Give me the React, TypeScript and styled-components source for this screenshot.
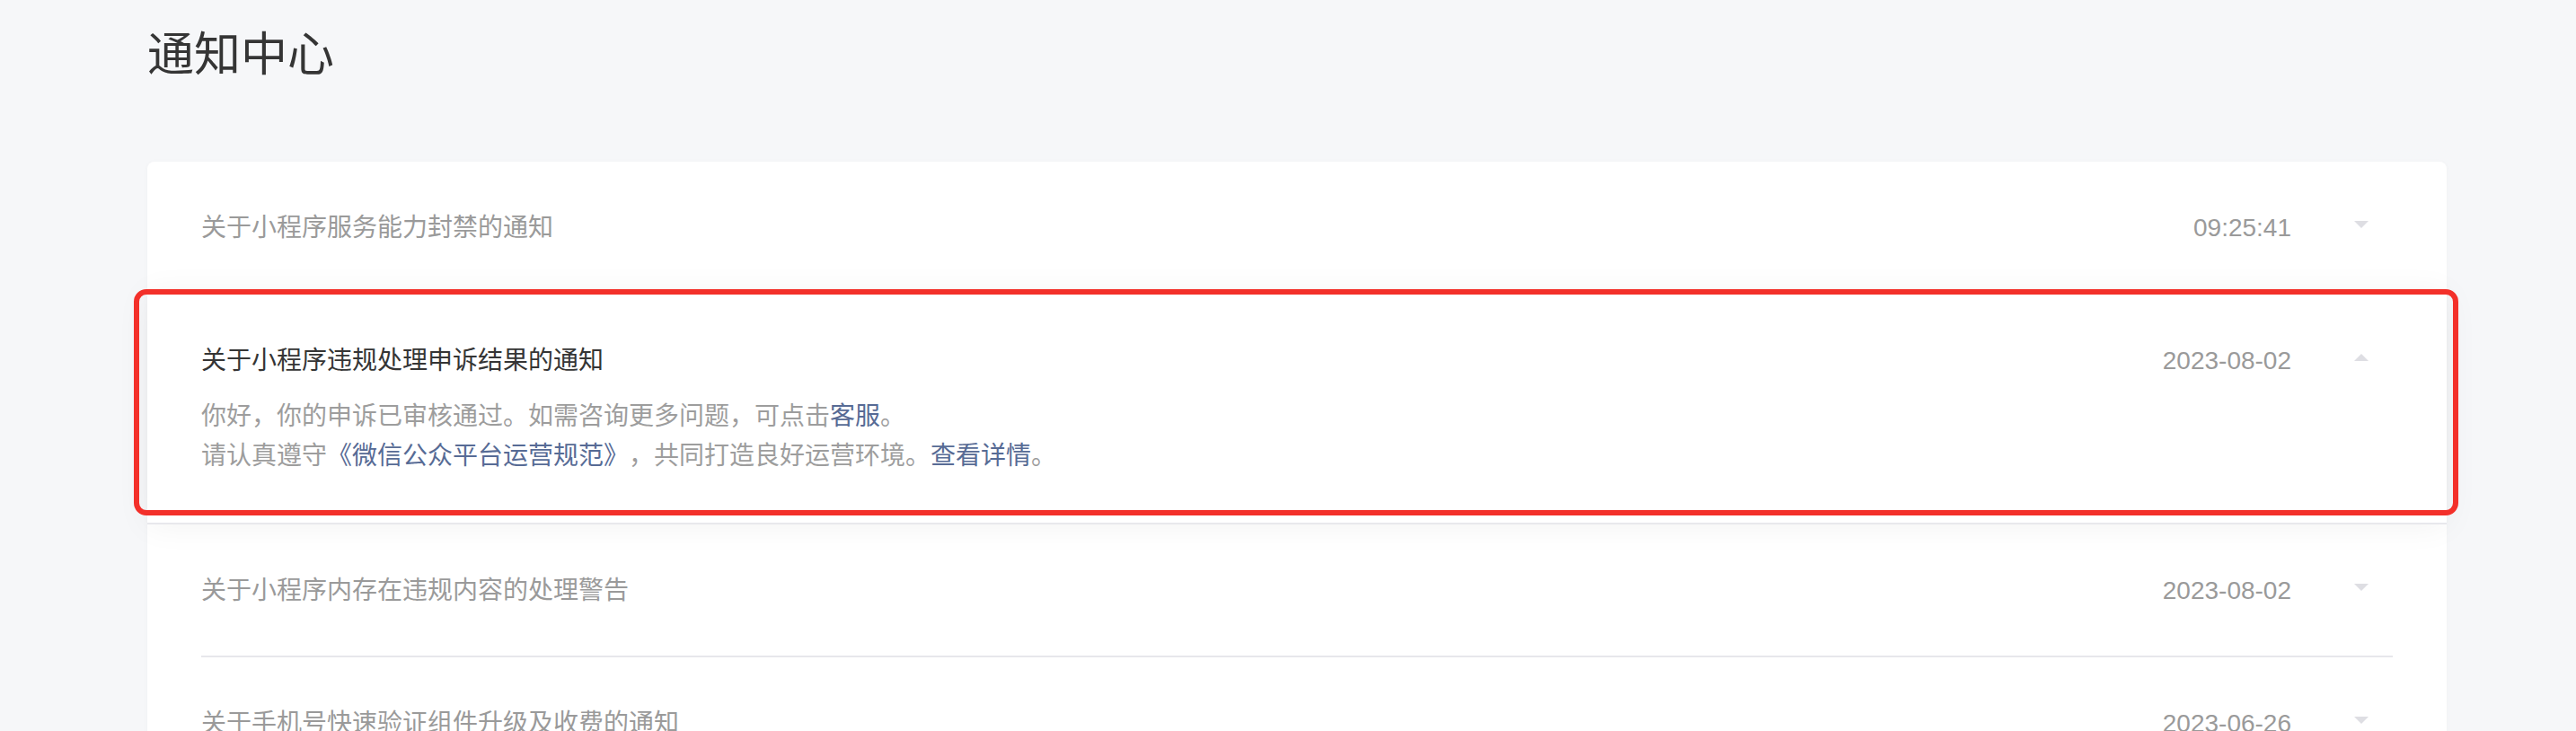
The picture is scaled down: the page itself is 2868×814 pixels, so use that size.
import styled, { createGlobalStyle } from "styled-components";

const GlobalStyle = createGlobalStyle`
  html, body {
    margin: 0;
    padding: 0;
    background: #f6f7f9;
  }
  body {
    font-family: "Liberation Sans", "Noto Sans CJK SC", sans-serif;
    text-spacing-trim: space-all;
    -webkit-font-smoothing: antialiased;
  }
`;

type Notice = {
  title: string;
  time: string;
  open?: boolean;
};

const notices: Notice[] = [
  { title: "关于小程序服务能力封禁的通知", time: "09:25:41" },
  { title: "关于小程序违规处理申诉结果的通知", time: "2023-08-02", open: true },
  { title: "关于小程序内存在违规内容的处理警告", time: "2023-08-02" },
  { title: "关于手机号快速验证组件升级及收费的通知", time: "2023-06-26" },
];

export default function App() {
  return (
    <Page>
      <GlobalStyle />
      <Title>通知中心</Title>
      <Card>
        {notices.map((n, i) => (
          <Item key={i} $open={!!n.open}>
            <ItemInner $divider={!n.open && i < notices.length - 1}>
              <Head>
                <Subject $open={!!n.open}>{n.title}</Subject>
                <Time>{n.time}</Time>
                <Caret $up={!!n.open} />
              </Head>
              {n.open && (
                <Body>
                  <p>
                    你好，你的申诉已审核通过。如需咨询更多问题，可点击<Link>客服</Link>。
                  </p>
                  <p>
                    请认真遵守<Link>《微信公众平台运营规范》</Link>，共同打造良好运营环境。
                    <Link>查看详情</Link>。
                  </p>
                </Body>
              )}
            </ItemInner>
            {n.open && <Highlight />}
          </Item>
        ))}
      </Card>
    </Page>
  );
}

const Page = styled.div`
  padding: 25px 144px 0 164px;
  min-height: 814px;
  box-sizing: border-box;
`;

const Title = styled.h1`
  margin: 0;
  font-size: 52px;
  line-height: 72px;
  font-weight: 400;
  color: #353535;
`;

const Card = styled.div`
  margin-top: 83px;
  background: #fff;
  border-radius: 8px;
  box-shadow: 0 1px 6px rgba(0, 0, 0, 0.03);
`;

const Item = styled.div<{ $open: boolean }>`
  position: relative;
  background: ${(p) => (p.$open ? "#fff" : "transparent")};
  z-index: ${(p) => (p.$open ? 1 : 0)};
  box-shadow: ${(p) => (p.$open ? "0 0 36px rgba(0, 0, 0, 0.06)" : "none")};
  border-bottom: ${(p) => (p.$open ? "2px solid #e8e8ec" : "none")};
`;

const ItemInner = styled.div<{ $divider: boolean }>`
  margin: 0 60px;
  padding: 52px 0 ${(p) => (p.$divider ? "50px" : "52px")};
  border-bottom: ${(p) => (p.$divider ? "2px solid #e7e7eb" : "none")};
`;

const Head = styled.div`
  display: flex;
  align-items: center;
  height: 44px;
`;

const Subject = styled.div<{ $open: boolean }>`
  flex: 1;
  font-size: 28px;
  line-height: 44px;
  color: ${(p) => (p.$open ? "#353535" : "#9a9a9a")};
  white-space: nowrap;
`;

const Time = styled.div`
  font-size: 28px;
  line-height: 44px;
  color: #9a9a9a;
`;

const Caret = styled.span<{ $up: boolean }>`
  width: 0;
  height: 0;
  margin: 0 27px 8px 70px;
  border-left: 8px solid transparent;
  border-right: 8px solid transparent;
  ${(p) =>
    p.$up ? "border-bottom: 8px solid #dedee3;" : "border-top: 8px solid #dedee3;"}
`;

const Body = styled.div`
  margin-top: 18px;
  font-size: 28px;
  line-height: 44px;
  color: #9d9d9d;
  p {
    margin: 0;
  }
`;

const Link = styled.span`
  color: #576b95;
`;

const Highlight = styled.div`
  position: absolute;
  top: -6px;
  bottom: 8px;
  left: -15px;
  right: -13px;
  border: 6px solid #f3302a;
  border-radius: 14px;
  pointer-events: none;
`;
